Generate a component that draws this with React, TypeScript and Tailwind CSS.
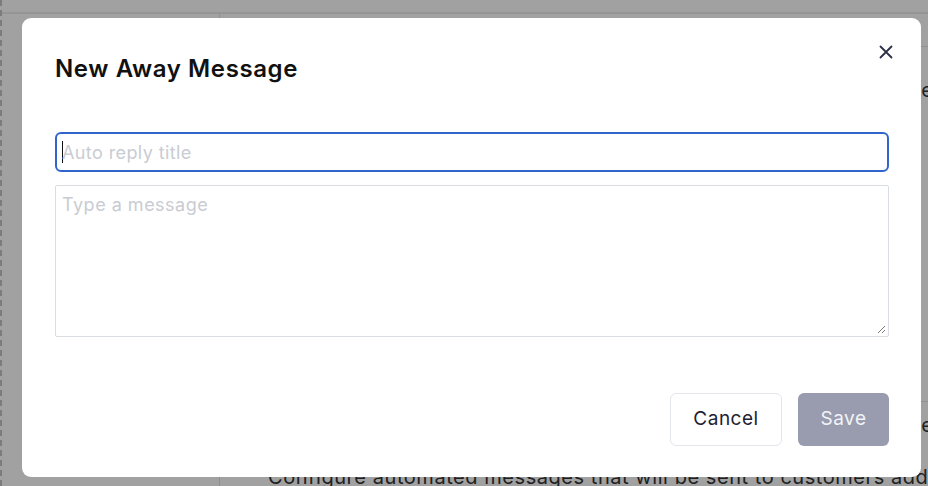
import React from "react";

export default function App() {
  return (
    <div
      className="relative h-[486px] w-[928px] overflow-hidden bg-white"
      style={{ fontFamily: "Inter, 'Noto Sans', sans-serif" }}
    >
      {/* background page */}
      <div className="flex h-full flex-col border-l-2 border-dashed border-[#c4c4c4]">
        <div className="h-[14px] shrink-0 border-b-2 border-[#ececec] bg-white" />
        <div className="flex flex-1">
          <div className="w-[218px] shrink-0 border-r border-[#e2e2e2]" />
          <div className="flex w-[715px] shrink-0 flex-col">
            <div className="h-[33px] shrink-0 border-b border-[#e6e6e6]" />
            <div className="flex h-[354px] shrink-0 justify-end pr-[2px] pt-[28px] text-[20px] text-[#333]">
              <span>e</span>
            </div>
            <div className="flex flex-col border-t border-[#e6e6e6] pl-[48px]">
              <div className="flex justify-end pr-[2px] pt-[10px] text-[20px] leading-[26px] text-[#333]">
                <span>e</span>
              </div>
              <div className="mt-[26px] whitespace-nowrap text-[20px] leading-[26px] tracking-[0.55px] text-[#333]">
                Configure automated messages that will be sent to customers add
              </div>
            </div>
          </div>
        </div>
      </div>

      {/* overlay */}
      <div className="absolute inset-0 bg-black/[0.37]" />

      {/* modal */}
      <div className="absolute left-[22px] top-[18px] flex h-[459px] w-[899px] flex-col rounded-[9px] bg-white pb-[31px] pl-[33px] pr-[32px] pt-[35px]">
        <div className="flex items-start justify-between">
          <h2 className="text-[24px] font-semibold leading-[32px] tracking-[0.6px] text-[#111]">
            New Away Message
          </h2>
          <button className="mr-[-7px] mt-[-11px] flex h-[20px] w-[20px] items-center justify-center text-[#2b3045]">
            <svg width="14" height="14" viewBox="0 0 14 14" fill="none">
              <path d="M1.5 1.5 L12.5 12.5 M12.5 1.5 L1.5 12.5" stroke="currentColor" strokeWidth="1.8" strokeLinecap="round" />
            </svg>
          </button>
        </div>
        <div className="mt-[47px] flex h-[40px] items-center rounded-[6px] border-2 border-[#3265cc] px-[5px]">
          <span className="mr-[-1px] h-[22px] w-[1px] bg-[#111]" />
          <span className="text-[18px] tracking-[0.4px] text-[#c9ccd3]">Auto reply title</span>
        </div>
        <div className="relative mt-[13px] h-[152px] rounded-[2px] border border-[#d9dce1] px-[6px] pt-[5px]">
          <span className="text-[18px] tracking-[0.5px] text-[#c9ccd3]">Type a message</span>
          <svg className="absolute bottom-[2px] right-[2px]" width="9" height="9" viewBox="0 0 9 9">
            <path d="M8 1 L1 8 M8 5 L5 8" stroke="#777" strokeWidth="1" />
          </svg>
        </div>
        <div className="mt-auto flex justify-end gap-[16px]">
          <button className="h-[53px] w-[112px] rounded-[6px] border border-[#e3e6ea] bg-white text-[19px] tracking-[0.5px] text-[#1e2233]">
            Cancel
          </button>
          <button className="h-[53px] w-[91px] rounded-[6px] bg-[#999cae] text-[19px] tracking-[0.5px] text-[#f2f3f7]">
            Save
          </button>
        </div>
      </div>
    </div>
  );
}
